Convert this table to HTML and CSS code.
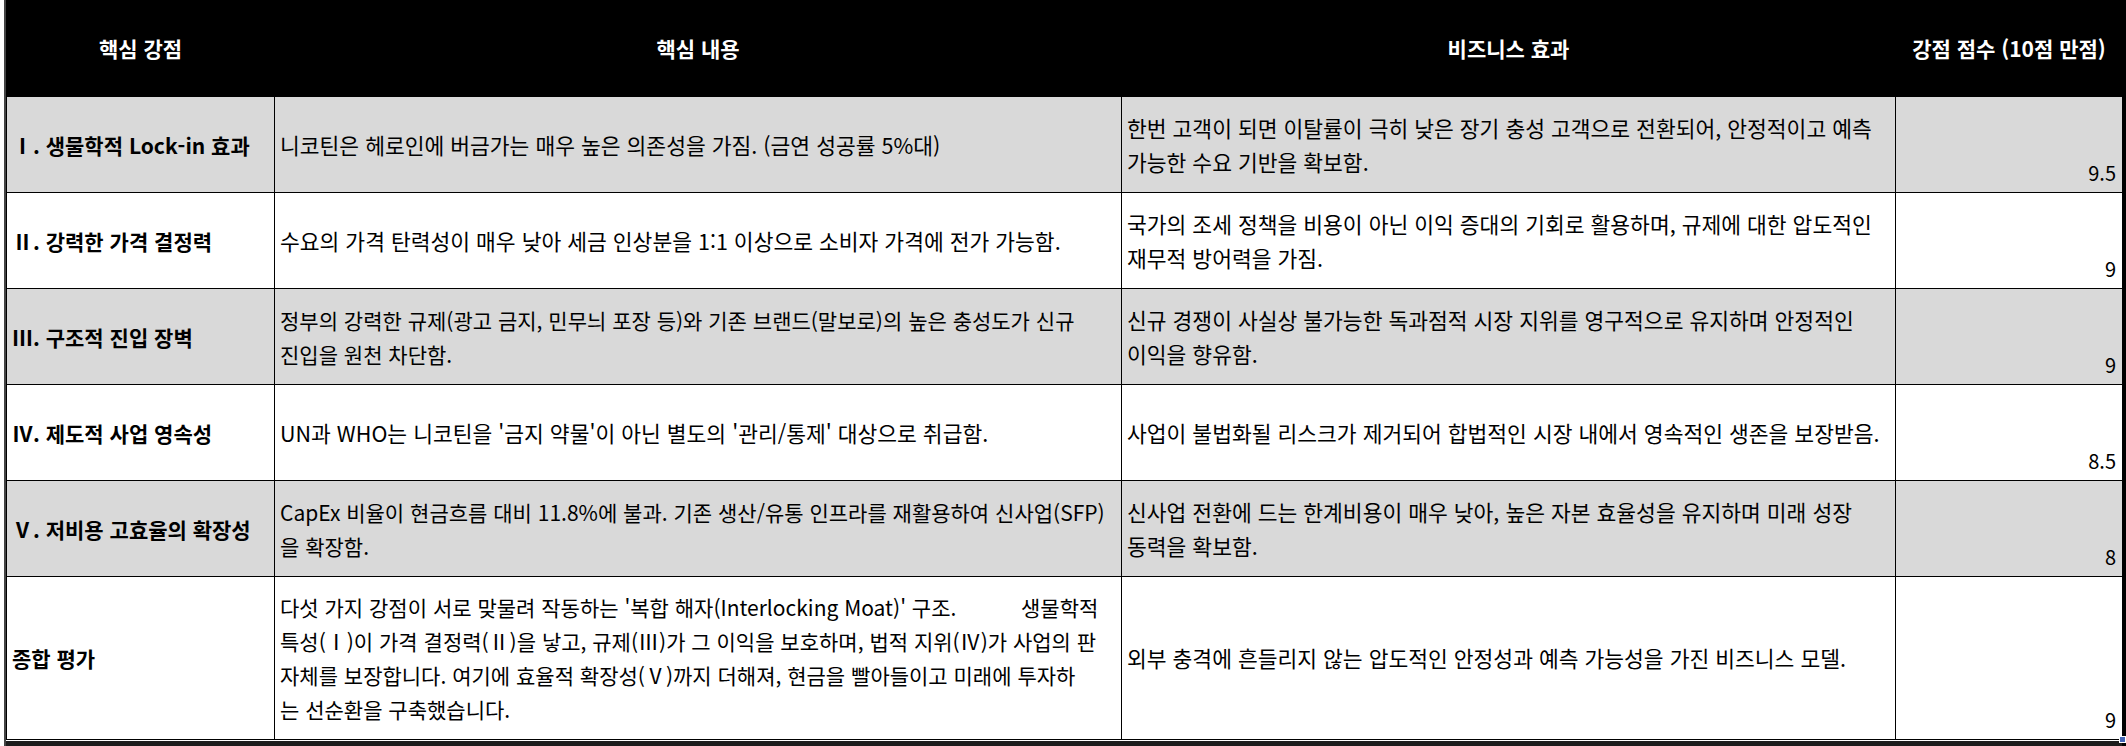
FILE: index.html
```html
<!DOCTYPE html>
<html lang="ko">
<head>
<meta charset="utf-8">
<title>핵심 강점</title>
<link rel="stylesheet" href="styles.css">
</head>
<body>
<div class="frame">
  <table class="sheet">
    <colgroup>
      <col class="c-key">
      <col class="c-content">
      <col class="c-effect">
      <col class="c-score">
    </colgroup>
    <thead>
      <tr class="head-row">
        <th>핵심 강점</th>
        <th>핵심 내용</th>
        <th>비즈니스 효과</th>
        <th>강점 점수 (10점 만점)</th>
      </tr>
    </thead>
    <tbody>
      <tr class="row shade">
        <td class="key">Ⅰ. 생물학적 Lock-in 효과</td>
        <td class="txt"><span class="ln">니코틴은 헤로인에 버금가는 매우 높은 의존성을 가짐. (금연 성공률 5%대)</span></td>
        <td class="txt"><span class="ln">한번 고객이 되면 이탈률이 극히 낮은 장기 충성 고객으로 전환되어, 안정적이고 예측</span><span class="ln">가능한 수요 기반을 확보함.</span></td>
        <td class="score">9.5</td>
      </tr>
      <tr class="row">
        <td class="key">Ⅱ. 강력한 가격 결정력</td>
        <td class="txt"><span class="ln">수요의 가격 탄력성이 매우 낮아 세금 인상분을 1:1 이상으로 소비자 가격에 전가 가능함.</span></td>
        <td class="txt"><span class="ln">국가의 조세 정책을 비용이 아닌 이익 증대의 기회로 활용하며, 규제에 대한 압도적인</span><span class="ln">재무적 방어력을 가짐.</span></td>
        <td class="score">9</td>
      </tr>
      <tr class="row shade">
        <td class="key">Ⅲ. 구조적 진입 장벽</td>
        <td class="txt dense"><span class="ln">정부의 강력한 규제(광고 금지, 민무늬 포장 등)와 기존 브랜드(말보로)의 높은 충성도가 신규</span><span class="ln">진입을 원천 차단함.</span></td>
        <td class="txt"><span class="ln">신규 경쟁이 사실상 불가능한 독과점적 시장 지위를 영구적으로 유지하며 안정적인</span><span class="ln">이익을 향유함.</span></td>
        <td class="score">9</td>
      </tr>
      <tr class="row">
        <td class="key">Ⅳ. 제도적 사업 영속성</td>
        <td class="txt"><span class="ln">UN과 WHO는 니코틴을 '금지 약물'이 아닌 별도의 '관리/통제' 대상으로 취급함.</span></td>
        <td class="txt"><span class="ln">사업이 불법화될 리스크가 제거되어 합법적인 시장 내에서 영속적인 생존을 보장받음.</span></td>
        <td class="score">8.5</td>
      </tr>
      <tr class="row shade">
        <td class="key">Ⅴ. 저비용 고효율의 확장성</td>
        <td class="txt dense"><span class="ln">CapEx 비율이 현금흐름 대비 11.8%에 불과. 기존 생산/유통 인프라를 재활용하여 신사업(SFP)</span><span class="ln">을 확장함.</span></td>
        <td class="txt"><span class="ln">신사업 전환에 드는 한계비용이 매우 낮아, 높은 자본 효율성을 유지하며 미래 성장</span><span class="ln">동력을 확보함.</span></td>
        <td class="score">8</td>
      </tr>
      <tr class="row total">
        <td class="key">종합 평가</td>
        <td class="txt dense"><span class="ln">다섯 가지 강점이 서로 맞물려 작동하는 '복합 해자(Interlocking Moat)' 구조.           생물학적</span><span class="ln">특성(Ⅰ)이 가격 결정력(Ⅱ)을 낳고, 규제(Ⅲ)가 그 이익을 보호하며, 법적 지위(Ⅳ)가 사업의 판</span><span class="ln">자체를 보장합니다. 여기에 효율적 확장성(Ⅴ)까지 더해져, 현금을 빨아들이고 미래에 투자하</span><span class="ln">는 선순환을 구축했습니다.</span></td>
        <td class="txt"><span class="ln">외부 충격에 흔들리지 않는 압도적인 안정성과 예측 가능성을 가진 비즈니스 모델.</span></td>
        <td class="score">9<span class="handle"></span></td>
      </tr>
    </tbody>
  </table>
  <div class="bottom-bar"></div>
</div>
</body>
</html>
```

FILE: styles.css
```css
* { box-sizing: border-box; }

html, body {
  margin: 0;
  padding: 0;
  background: #ffffff;
}

body {
  width: 2126px;
  height: 746px;
  overflow: hidden;
  font-family: "Noto Sans CJK KR", "Noto Sans", sans-serif;
  font-size: 20px;
  color: #000;
}

.frame {
  margin-left: 4px;
  width: 2122px;
  border-left: 2px solid #444;
  border-right: 4px solid #000;
}

.sheet {
  width: 2116px;
  table-layout: fixed;
  border-collapse: collapse;
}

.c-key { width: 268px; }
.c-content { width: 847px; }
.c-effect { width: 774px; }
.c-score { width: 227px; }

.head-row { height: 96px; }

.head-row th {
  background: #000;
  color: #fff;
  font-weight: 700;
  font-size: 21px;
  text-align: center;
  vertical-align: middle;
  padding: 0 0 2px 0;
  border: 1px solid #000;
  white-space: nowrap;
}

.row { height: 96px; }
.row.total { height: 163px; }

.row td {
  border: 1px solid #000;
  background: #fff;
  padding: 0;
  line-height: 34px;
}

.row.shade td { background: #d9d9d9; }

.key {
  font-weight: 700;
  font-size: 21px;
  padding-left: 5px !important;
  vertical-align: middle;
  white-space: nowrap;
}

.txt {
  font-size: 21.5px;
  padding-left: 5px !important;
  vertical-align: middle;
}

.txt.dense { font-size: 21px; }

.ln {
  display: block;
  white-space: pre;
}

.score {
  position: relative;
  font-size: 20px;
  text-align: right;
  vertical-align: bottom;
  padding-right: 6px !important;
  padding-bottom: 2px !important;
}

.handle {
  position: absolute;
  right: -4px;
  bottom: -4px;
  width: 7px;
  height: 7px;
  background: #4466b8;
  border: 1px solid #fff;
}

.bottom-bar {
  height: 6px;
  margin-top: 1px;
  background: #1c1c1c;
}
```
